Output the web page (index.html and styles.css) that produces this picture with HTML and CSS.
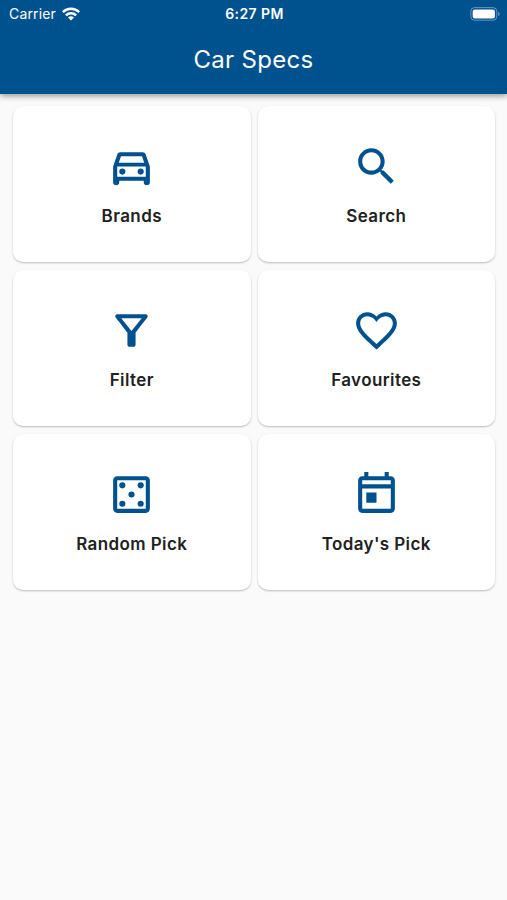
FILE: index.html
```
<!DOCTYPE html>
<html lang="en">
<head>
    <meta charset="utf-8">
    <title>Car Specs</title>
    <link rel="stylesheet" href="styles.css">
</head>
<body>
    <header class="app-bar">
        <div class="status-bar">
            <div class="carrier">
                <span>Carrier</span>
                <svg class="wifi" viewBox="0 0 18 14">
                    <path d="M0 4.2a12.8 12.8 0 0 1 18 0l-1.7 1.8a10.4 10.4 0 0 0-14.6 0z"/>
                    <path d="M3 7.4a8.5 8.5 0 0 1 12 0l-1.8 1.9a6 6 0 0 0-8.4 0z"/>
                    <path d="M6 10.6a4.2 4.2 0 0 1 6 0L9 13.6z"/>
                </svg>
            </div>
            <span class="time">6:27 PM</span>
            <svg class="battery" viewBox="0 0 30 14">
                <rect class="battery-case" x="0.8" y="0.6" width="26" height="12.6" rx="3.8"/>
                <rect x="2.7" y="2.4" width="22.2" height="9" rx="2.2"/>
                <path class="battery-tip" d="M28.2 4.8c2 .8 2 3.4 0 4.2z"/>
            </svg>
        </div>
        <h1>Car Specs</h1>
    </header>

    <main class="menu">
        <a class="card">
            <svg class="icon" viewBox="0 0 24 24">
                <path d="M18.92 6.01C18.72 5.42 18.16 5 17.5 5h-11c-.66 0-1.21.42-1.42 1.01L3 12v8c0 .55.45 1 1 1h1c.55 0 1-.45 1-1v-1h12v1c0 .55.45 1 1 1h1c.55 0 1-.45 1-1v-8l-2.08-5.99zM6.85 7h10.29l1.08 3.11H5.77L6.85 7zM19 17H5v-5h14v5z"/>
                <circle cx="7.5" cy="14.5" r="1.5"/>
                <circle cx="16.5" cy="14.5" r="1.5"/>
            </svg>
            <span>Brands</span>
        </a>
        <a class="card">
            <svg class="icon" viewBox="0 0 24 24">
                <path d="M15.5 14h-.79l-.28-.27C15.41 12.59 16 11.11 16 9.5 16 5.91 13.09 3 9.5 3S3 5.91 3 9.5 5.91 16 9.5 16c1.61 0 3.09-.59 4.23-1.57l.27.28v.79l5 4.99L20.49 19l-4.99-5zm-6 0C7.01 14 5 11.99 5 9.5S7.01 5 9.5 5 14 7.01 14 9.5 11.99 14 9.5 14z"/>
            </svg>
            <span>Search</span>
        </a>
        <a class="card">
            <svg class="icon" viewBox="0 0 24 24">
                <path d="M7 6h10l-5.01 6.3L7 6zm-2.75-.39C6.27 8.2 10 13 10 13v6c0 .55.45 1 1 1h2c.55 0 1-.45 1-1v-6s3.72-4.8 5.74-7.39c.51-.66.04-1.61-.79-1.61H5.04c-.83 0-1.3.95-.79 1.61z"/>
            </svg>
            <span>Filter</span>
        </a>
        <a class="card">
            <svg class="icon" viewBox="0 0 24 24">
                <path d="M16.5 3c-1.74 0-3.41.81-4.5 2.09C10.91 3.81 9.24 3 7.5 3 4.42 3 2 5.42 2 8.5c0 3.78 3.4 6.86 8.55 11.54L12 21.35l1.45-1.32C18.6 15.36 22 12.28 22 8.5 22 5.42 19.58 3 16.5 3zM12 18.65C7.14 14.24 4 11.39 4 8.5 4 6.5 5.5 5 7.5 5c1.8 0 3.4 1 4.5 2.8C13.1 6 14.7 5 16.5 5c2 0 3.5 1.5 3.5 3.5 0 2.89-3.14 5.74-8 10.15z"/>
            </svg>
            <span>Favourites</span>
        </a>
        <a class="card">
            <svg class="icon" viewBox="0 0 24 24">
                <path d="M19 3H5c-1.1 0-2 .9-2 2v14c0 1.1.9 2 2 2h14c1.1 0 2-.9 2-2V5c0-1.1-.9-2-2-2zm0 16H5V5h14v14z"/>
                <circle cx="7.5" cy="7.5" r="1.5"/>
                <circle cx="16.5" cy="7.5" r="1.5"/>
                <circle cx="12" cy="12" r="1.5"/>
                <circle cx="7.5" cy="16.5" r="1.5"/>
                <circle cx="16.5" cy="16.5" r="1.5"/>
            </svg>
            <span>Random Pick</span>
        </a>
        <a class="card">
            <svg class="icon" viewBox="0 0 24 24">
                <path d="M19 3h-1V1h-2v2H8V1H6v2H5c-1.11 0-1.99.9-1.99 2L3 19c0 1.1.89 2 2 2h14c1.1 0 2-.9 2-2V5c0-1.1-.9-2-2-2zm0 16H5V9h14v10zm0-12H5V5h14v2zM7 11h5v5H7z"/>
            </svg>
            <span>Today's Pick</span>
        </a>
    </main>
</body>
</html>
```
FILE: styles.css
```
body {
    margin: 0;
    min-height: 900px;
    background-color: #fafafa;
    color: #212121;
    font-family: Inter, "Liberation Sans", sans-serif;
}
.app-bar {
    height: 94px;
    background-color: #00528e;
    color: white;
    box-shadow: 0 2px 6px rgba(0, 0, 0, 0.4);
}
.status-bar {
    display: grid;
    grid-template-columns: 1fr auto 1fr;
    align-items: center;
    height: 27px;
    padding: 0 7px 0 9px;
    font-size: 14px;
}
.carrier {
    display: flex;
    align-items: center;
    gap: 6px;
    letter-spacing: 0.15px;
}
.wifi {
    width: 18px;
    height: 14px;
    fill: white;
}
.time {
    font-weight: 600;
    letter-spacing: 0.4px;
}
.battery {
    width: 30px;
    height: 14px;
    justify-self: end;
    fill: white;
}
.battery-case {
    fill: none;
    stroke: rgba(255, 255, 255, 0.4);
}
.battery-tip {
    fill: rgba(255, 255, 255, 0.4);
}
h1 {
    margin: 0;
    font-size: 24px;
    font-weight: 400;
    line-height: 66px;
    letter-spacing: 0.3px;
    text-align: center;
}
.menu {
    display: grid;
    grid-template-columns: 1fr 1fr;
    grid-auto-rows: 156px;
    gap: 8px 7px;
    padding: 12px 12px 12px 13px;
}
.card {
    display: flex;
    flex-direction: column;
    align-items: center;
    justify-content: center;
    gap: 13px;
    padding-top: 1px;
    box-sizing: border-box;
    border-radius: 10px;
    background-color: white;
    box-shadow: 0 1px 2px rgba(0, 0, 0, 0.25);
    font-size: 17px;
    font-weight: 600;
    line-height: 24px;
    letter-spacing: 0.4px;
}
.icon {
    width: 49px;
    height: 49px;
    fill: #00528e;
}
```
